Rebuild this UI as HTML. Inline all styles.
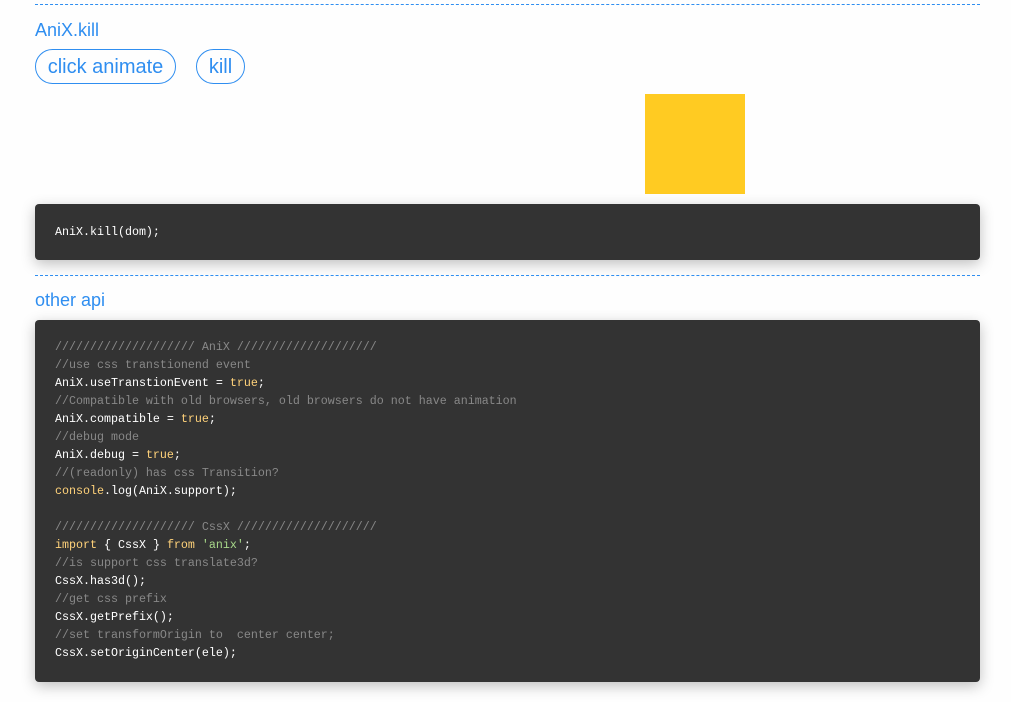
<!DOCTYPE html>
<html><head><meta charset="utf-8"><style>
body{margin:0;background:#fefefe;font-family:"Liberation Sans",sans-serif;}
.hr{position:absolute;left:35px;width:945px;border-top:1px dashed #2f8ef0;}
.t{position:absolute;left:35px;color:#2f8ef0;font-size:18px;line-height:20px;}
.btn{position:absolute;top:49px;height:33px;border:1px solid #2f8ef0;border-radius:18px;color:#2f8ef0;font-size:20px;line-height:35px;text-align:center;box-sizing:content-box;}
.box{position:absolute;left:645px;top:94px;width:100px;height:100px;background:#ffcb22;}
.code{position:absolute;left:35px;width:945px;background:#333;border-radius:4px;box-shadow:0 4px 14px rgba(0,0,0,.25);font-family:"Liberation Mono","Noto Sans CJK SC",monospace;font-size:11.67px;line-height:18px;color:#fff;white-space:pre;box-sizing:border-box;padding-left:20px;}
.c{color:#888}.k{color:#ffd27a}.s{color:#a8d88a}
</style></head><body>
<div class="hr" style="top:4px"></div>
<div class="t" style="top:20px">AniX.kill</div>
<div class="btn" style="left:35px;width:139px">click animate</div>
<div class="btn" style="left:196px;width:47px">kill</div>
<div class="box"></div>
<div class="code" style="top:204px;height:56px;padding-top:19px">AniX.kill(dom);</div>
<div class="hr" style="top:275px"></div>
<div class="t" style="top:290px">other api</div>
<div class="code" style="top:320px;height:362px;padding-top:18px"><span class="c">//////////////////// AniX ////////////////////</span>
<span class="c">//use css transtionend event</span>
AniX.useTranstionEvent = <span class="k">true</span>;
<span class="c">//Compatible with old browsers, old browsers do not have animation</span>
AniX.compatible = <span class="k">true</span>;
<span class="c">//debug mode</span>
AniX.debug = <span class="k">true</span>;
<span class="c">//(readonly) has css Transition?</span>
<span class="k">console</span>.log(AniX.support);

<span class="c">//////////////////// CssX ////////////////////</span>
<span class="k">import</span> { CssX } <span class="k">from</span> <span class="s">'anix'</span>;
<span class="c">//is support css translate3d?</span>
CssX.has3d();
<span class="c">//get css prefix</span>
CssX.getPrefix();
<span class="c">//set transformOrigin to  center center;</span>
CssX.setOriginCenter(ele);</div>
</body></html>
